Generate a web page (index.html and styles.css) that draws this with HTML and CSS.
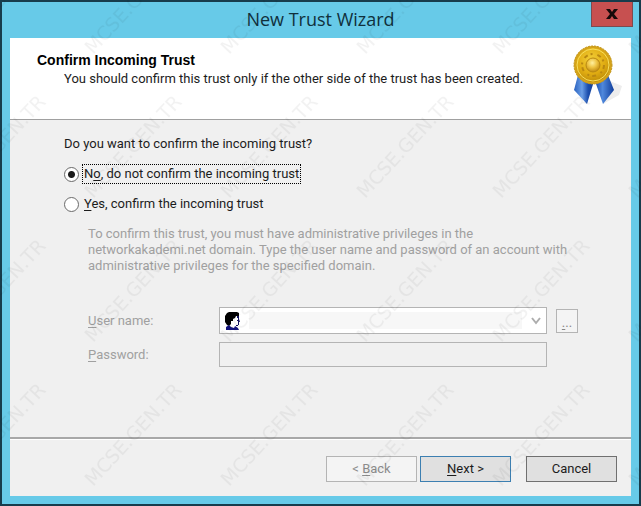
FILE: index.html
```html
<!DOCTYPE html>
<html lang="en">
<head>
<meta charset="utf-8">
<title>New Trust Wizard</title>
<link rel="stylesheet" href="styles.css">
</head>
<body>
<main class="window">
  <div class="titlebar">
    <h1 class="title">New Trust Wizard</h1>
    <button class="close" type="button" aria-label="Close">
      <svg width="12" height="10" viewBox="0 0 12 10" aria-hidden="true"><path d="M0 0h4l2 3 2-3h4L8 5l4 5H8L6 7l-2 3H0l4-5z" fill="#160a0a"/></svg>
    </button>
  </div>
  <form class="client">
    <header class="banner">
      <div class="heading">
        <h2 class="heading-title">Confirm Incoming Trust</h2>
        <p class="heading-text">You should confirm this trust only if the other side of the trust has been created.</p>
      </div>
      <svg class="medal" width="54" height="62" viewBox="0 0 54 62" aria-hidden="true">
        <defs>
          <radialGradient id="gold" cx="45%" cy="35%" r="65%"><stop offset="0" stop-color="#f3cf38"/><stop offset=".6" stop-color="#e0ac12"/><stop offset="1" stop-color="#bb8a08"/></radialGradient>
          <radialGradient id="boss" cx="45%" cy="35%" r="65%"><stop offset="0" stop-color="#fff0a0"/><stop offset=".5" stop-color="#eec443"/><stop offset="1" stop-color="#c08a10"/></radialGradient>
          <linearGradient id="tailLeft" x1="0" x2="1"><stop offset="0" stop-color="#2a62c0"/><stop offset=".4" stop-color="#6a9ee6"/><stop offset=".7" stop-color="#1c4fae"/><stop offset="1" stop-color="#123c94"/></linearGradient>
          <linearGradient id="tailRight" x1="0" x2="1"><stop offset="0" stop-color="#1a4cab"/><stop offset=".4" stop-color="#4f88dc"/><stop offset="1" stop-color="#0f3d9c"/></linearGradient>
        </defs>
        <path d="M40 38l12 5-3 9-16 9z" fill="#ededed"/>
        <path d="M8 32L4 47l13 14 7-23z" fill="url(#tailLeft)"/>
        <path d="M25 38l8 23 11-14-6-15z" fill="url(#tailRight)"/>
        <circle cx="23" cy="22" r="18" fill="url(#gold)" stroke="#d4a31a" stroke-width="2"/>
        <circle cx="23" cy="22" r="19" fill="none" stroke="#c3951a" stroke-dasharray="2 1"/>
        <circle cx="23" cy="22" r="16" fill="none" stroke="#f8df60"/>
        <circle cx="23" cy="22" r="11" fill="none" stroke="#b98812" stroke-width="2" stroke-dasharray="4 3 2 5"/>
        <circle cx="23" cy="22" r="7" fill="url(#boss)" stroke="#b98812"/>
      </svg>
    </header>
    <section class="page">
      <fieldset class="choices">
        <legend class="question">Do you want to confirm the incoming trust?</legend>
        <div class="choice">
          <input class="radio" type="radio" name="confirm" id="no" checked>
          <label class="choice-label focused" for="no">N<u>o</u>, do not confirm the incoming trust</label>
        </div>
        <div class="choice">
          <input class="radio" type="radio" name="confirm" id="yes">
          <label class="choice-label" for="yes"><u>Y</u>es, confirm the incoming trust</label>
        </div>
      </fieldset>
      <div class="account">
        <p class="note">To confirm this trust, you must have administrative privileges in the networkakademi.net domain. Type the user name and password of an account with administrative privileges for the specified domain.</p>
        <div class="row">
          <label class="field-label" for="user"><u>U</u>ser name:</label>
          <div class="combo">
            <svg class="person" width="15" height="18" viewBox="0 0 15 18" aria-hidden="true">
              <path d="M6 4h7v3l2 3h-2v4h-3v2H5V9z" fill="#fff"/>
              <path d="M4 0h8l2 1v3h-3l-1 2-2 1v2L6 9v3l-2 2-2-1-2-3V4l2-3z" fill="#000"/>
              <path d="M12 4h2v3l1 3h-1v3h-3v1h2V9h-1V8h1V6h-1z" fill="#10105c"/>
              <path d="M1 15l3-2 2 2 3 1 1-2 3 2 1 2H1z" fill="#10107c"/>
            </svg>
            <select class="select" id="user" disabled><option></option></select>
            <svg class="chevron" width="10" height="8" viewBox="0 0 10 8" aria-hidden="true"><path d="M1 1l4 5 4-5" fill="none" stroke="#adadad" stroke-width="2"/></svg>
          </div>
          <button class="browse" type="button" aria-label="Browse" disabled><u>.</u>..</button>
        </div>
        <div class="row">
          <label class="field-label" for="password"><u>P</u>assword:</label>
          <input class="password" type="password" id="password" disabled>
        </div>
      </div>
    </section>
    <footer class="actions">
      <button class="button" type="button" disabled>&lt; <u>B</u>ack</button>
      <button class="button primary" type="button"><u>N</u>ext &gt;</button>
      <button class="button cancel" type="button">Cancel</button>
    </footer>
  </form>
</main>
<svg class="watermark" aria-hidden="true">
  <defs>
    <pattern id="marks" x="76" y="58" width="136" height="144" patternUnits="userSpaceOnUse">
      <text class="mark" transform="translate(17 141) rotate(-47)">MCSE.GEN.TR</text>
    </pattern>
  </defs>
  <rect width="100%" height="100%" fill="url(#marks)"/>
</svg>
</body>
</html>
```
FILE: styles.css
```css
* { box-sizing: border-box; }

body {
  margin: 0;
  font: 13px/16px Roboto, "Liberation Sans", sans-serif;
  color: #1c1c1c;
}

h1, h2, p, fieldset { margin: 0; }

u { text-underline-offset: 2px; }

svg { flex: none; }

.window {
  display: flex;
  flex-direction: column;
  min-height: 100vh;
  padding: 0 8px 8px;
  border: 2px solid #173c4c;
  background: #67cae8;
}

.titlebar {
  display: grid;
  grid-template-columns: 1fr auto 1fr;
  align-items: start;
  height: 36px;
}

.title {
  grid-column: 2;
  padding-top: 5px;
  font: 18px/24px "Open Sans", "Noto Sans", sans-serif;
  color: #10303c;
}

.close {
  justify-self: end;
  display: grid;
  place-items: center;
  width: 42px;
  height: 25px;
  margin-right: -2px;
  padding: 0;
  border: 1px solid #7d4a50;
  border-top: 0;
  background: #c75050;
}

.client {
  flex: 1;
  display: flex;
  flex-direction: column;
  background: #f0f0f0;
}

.banner {
  display: flex;
  justify-content: space-between;
  height: 82px;
  padding: 5px 7px 0 27px;
  border-bottom: 1px solid #a0a0a0;
  background: #fff;
}

.heading { padding-top: 8px; }

.heading-title {
  font: bold 14px/18px "Liberation Sans", Arial, sans-serif;
  color: #000;
}

.heading-text {
  padding-left: 27px;
  line-height: 20px;
}

.page {
  flex: 1;
  padding: 16px 24px 0 54px;
}

.choices {
  padding: 0;
  border: 0;
}

.question { padding: 0; }

.choice {
  display: flex;
  align-items: center;
  gap: 3px;
  height: 30px;
}

.question + .choice { margin-top: 7px; }

.radio {
  appearance: none;
  width: 15px;
  height: 15px;
  margin: 0;
  border: 1px solid #6a6a6a;
  border-radius: 50%;
  background: #fff;
}

.radio:checked { background: radial-gradient(circle, #1a1a1a 3px, #fff 4px); }

.choice-label {
  padding: 1px;
  border: 1px solid transparent;
}

.focused { border: 1px dotted #000; }

.account {
  padding: 7px 0 0 24px;
  color: #a0a0a0;
}

.note { max-width: 492px; }

.row {
  display: flex;
  align-items: center;
  margin-top: 8px;
}

.note + .row { margin-top: 33px; }

.field-label {
  flex: none;
  width: 131px;
}

.combo {
  display: flex;
  align-items: center;
  flex: 0 1 328px;
  gap: 9px;
  height: 27px;
  padding: 0 5px;
  border: 1px solid #b4b4b4;
  background: #fff;
}

.select {
  appearance: none;
  flex: 1;
  min-width: 0;
  height: 17px;
  border: 0;
  background: #f4f4f4;
}

.browse {
  width: 22px;
  height: 24px;
  margin-left: 9px;
  padding: 4px 0 0;
  border: 1px solid #b4b4b4;
  background: #f4f4f4;
  color: #888;
  font: inherit;
}

.password {
  flex: 0 1 328px;
  min-width: 0;
  height: 25px;
  border: 1px solid #b4b4b4;
  background: #f0f0f0;
}

.actions {
  display: flex;
  justify-content: flex-end;
  gap: 3px;
  padding: 17px 14px 14px;
  border-top: 2px solid #a8a8a8;
  box-shadow: inset 0 1px #fff;
}

.button {
  width: 91px;
  height: 26px;
  padding: 0;
  border: 1px solid #707070;
  background: #e0e0e0;
  color: #1c1c1c;
  font: inherit;
}

.button:disabled {
  border-color: #b4b4b4;
  background: #f4f4f4;
  color: #8c8c8c;
}

.primary { border-color: #3c7fb1; }

.cancel { margin-left: 12px; }

.watermark {
  position: absolute;
  inset: 0;
  width: 100%;
  height: 100%;
  pointer-events: none;
}

.mark {
  font: 19px "DejaVu Sans", sans-serif;
  fill: #000;
  fill-opacity: .05;
}
```
